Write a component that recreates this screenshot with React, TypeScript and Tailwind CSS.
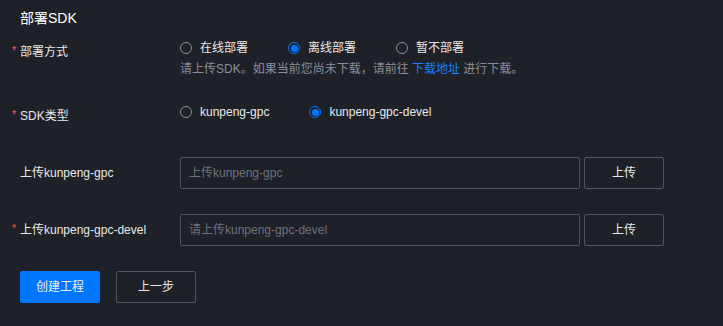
const font = "font-['Liberation_Sans','Noto_Sans_CJK_SC',sans-serif]"

function Radio({ label, checked = false }: { label: string; checked?: boolean }) {
    return (
        <label className="flex items-center mr-10">
            <span
                className={`w-3 h-3 rounded-full border flex items-center justify-center ${checked ? 'border-[#0077ff]' : 'border-[#8a8e99]'}`}
            >
                {checked && <span className="w-[7px] h-[7px] rounded-full bg-[#0077ff]" />}
            </span>
            <span className="ml-2 text-xs leading-4 text-[#e8e8e8]">{label}</span>
        </label>
    )
}

function Label({ text, required = false, className = '' }: { text: string; required?: boolean; className?: string }) {
    return (
        <div className={`w-[168px] flex items-start shrink-0 ${className}`}>
            <span className="w-2 text-[11px] leading-3 text-[#f45c5e]">{required ? '*' : ''}</span>
            <span className="text-xs leading-4 text-[#e8e8e8]">{text}</span>
        </div>
    )
}

function UploadRow({ label, placeholder, required = false }: { label: string; placeholder: string; required?: boolean }) {
    return (
        <div className="flex items-center">
            <Label text={label} required={required} />
            <div className="w-[400px] h-8 border border-[#4f5563] rounded-[2px] flex items-center px-2">
                <span className="text-xs text-[#6c7180]">{placeholder}</span>
            </div>
            <button className="ml-1 w-20 h-8 border border-[#4f5563] rounded-[2px] text-xs text-[#e8e8e8]">上传</button>
        </div>
    )
}

export default function App() {
    return (
        <div className={`w-[723px] h-[326px] bg-[#1f2129] ${font}`}>
            <div className="h-9 flex items-center pl-5">
                <h2 className="text-sm text-white">部署SDK</h2>
            </div>

            <div className="pl-3">
                {/* 部署方式 */}
                <div className="flex">
                    <Label text="部署方式" required className="mt-2" />
                    <div>
                        <div className="h-6 flex items-center">
                            <Radio label="在线部署" />
                            <Radio label="离线部署" checked />
                            <Radio label="暂不部署" />
                        </div>
                        <p className="mt-px text-xs leading-4 text-[#8a8e99]">
                            请上传SDK。如果当前您尚未下载，请前往 <span className="text-[#1a7dff]">下载地址</span> 进行下载。
                        </p>
                    </div>
                </div>

                {/* SDK类型 */}
                <div className="flex mt-[23px]">
                    <Label text="SDK类型" required className="mt-2" />
                    <div className="h-6 flex items-center">
                        <Radio label="kunpeng-gpc" />
                        <Radio label="kunpeng-gpc-devel" checked />
                    </div>
                </div>

                <div className="mt-[33px]">
                    <UploadRow label="上传kunpeng-gpc" placeholder="上传kunpeng-gpc" />
                </div>
                <div className="mt-[25px]">
                    <UploadRow label="上传kunpeng-gpc-devel" placeholder="请上传kunpeng-gpc-devel" required />
                </div>

                <div className="mt-[25px] pl-2 flex gap-4">
                    <button className="w-20 h-8 rounded-[2px] bg-[#0077ff] text-xs text-[#f0f0f0]">创建工程</button>
                    <button className="w-20 h-8 rounded-[2px] border border-[#4f5563] text-xs text-[#e8e8e8]">上一步</button>
                </div>
            </div>
        </div>
    )
}
